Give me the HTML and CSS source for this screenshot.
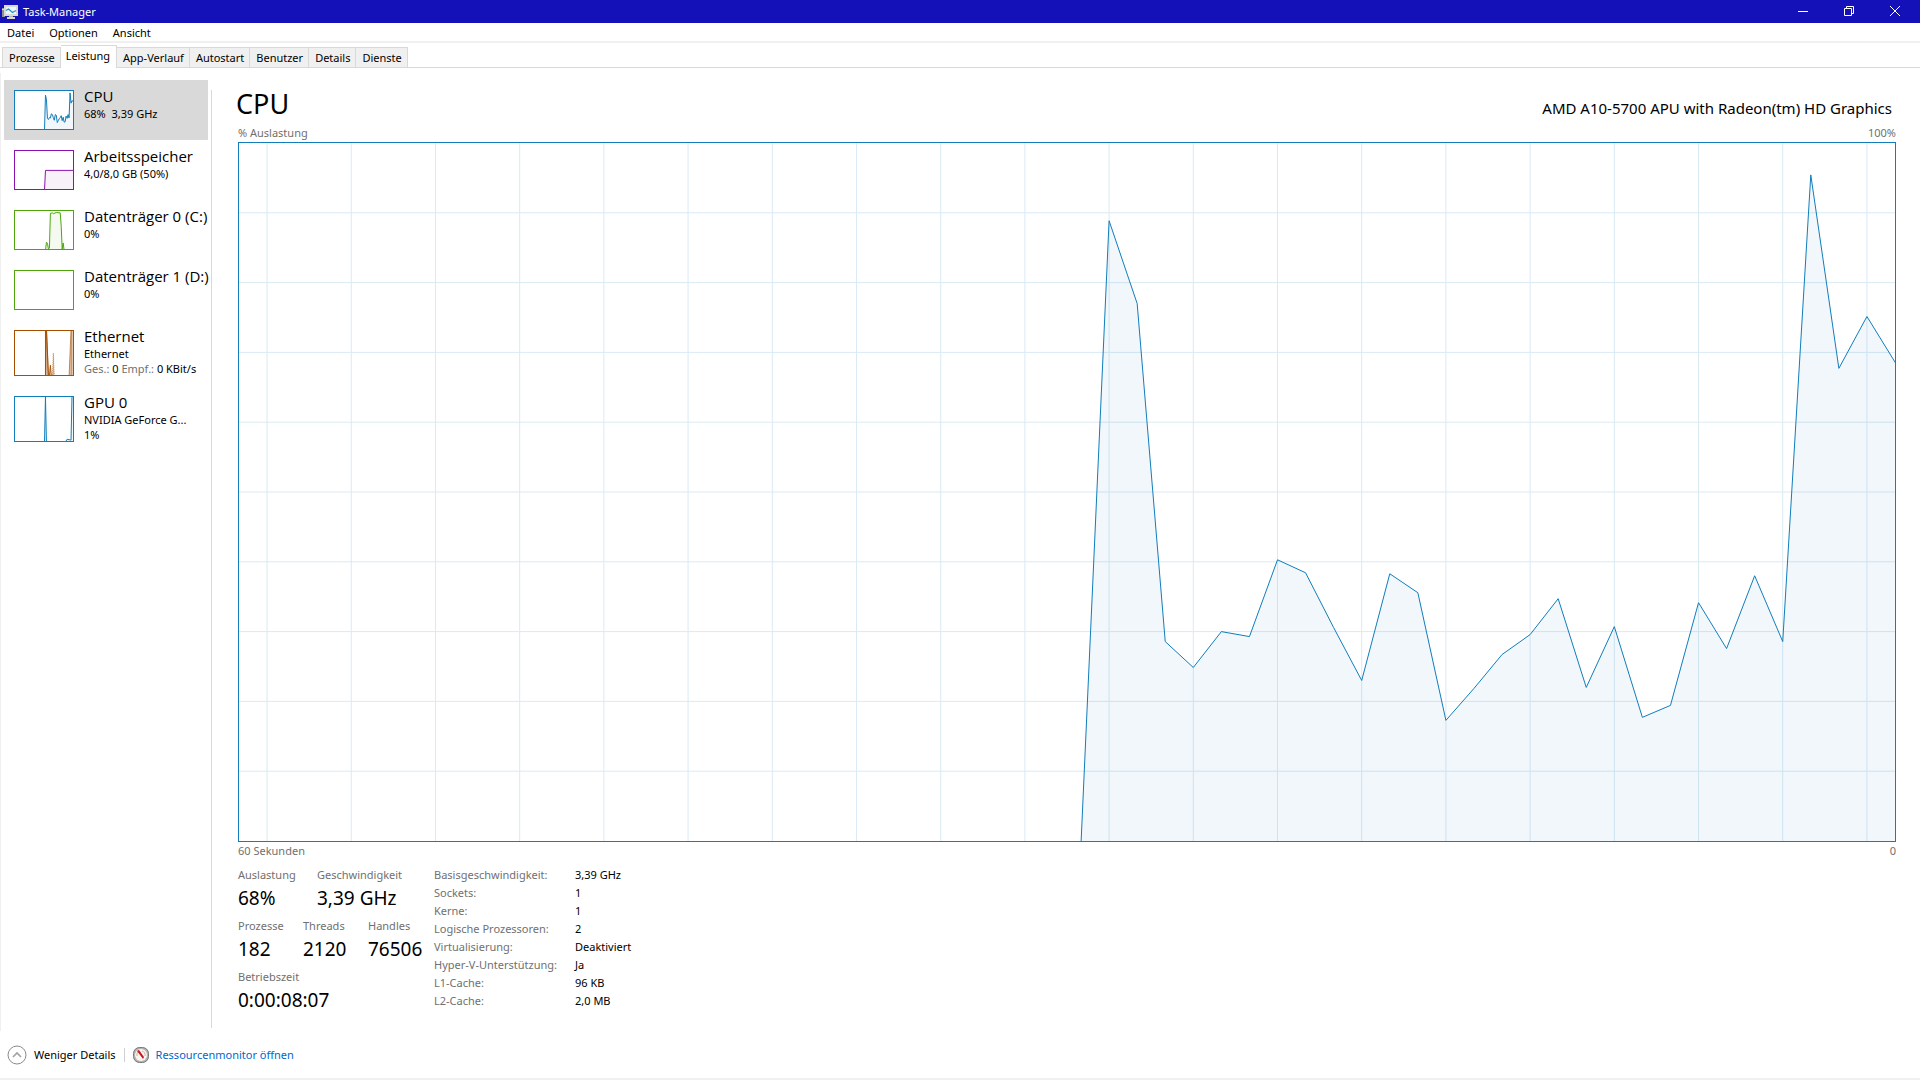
FILE: index.html
```html
<!DOCTYPE html>
<html lang="de">
  <head>
    <meta charset="UTF-8" />
    <meta name="viewport" content="width=device-width, initial-scale=1.0" />
    <title>Task-Manager</title>
    <link rel="stylesheet" href="styles.css">
  </head>
  <body>
    <header class="titlebar">
      <svg class="app-icon" width="16" height="16" viewBox="0 0 16 16">
        <rect x="0" y="4" width="3" height="9" fill="#8f9296" />
        <rect x="0" y="5" width="2" height="1" fill="#d8dadc" />
        <rect x="2" y="1" width="14" height="11" fill="#d9d9d2" />
        <rect x="4" y="3" width="10" height="7" fill="#e9f7fc" />
        <path d="M4 6.500l2.500-1.500 4 3.500 3.500-2" fill="none" stroke="#2a93bd" stroke-width="1.200" />
        <rect x="7" y="12" width="4" height="1" fill="#b5b5ae" />
        <rect x="5" y="13" width="8" height="2" fill="#d9d9d2" />
      </svg>
      <h1>Task-Manager</h1>
      <div class="window-buttons">
        <button aria-label="Minimieren">
          <svg width="10" height="10" viewBox="0 0 10 10"><path d="M0 5.5h10" /></svg>
        </button>
        <button aria-label="Verkleinern">
          <svg width="10" height="10" viewBox="0 0 10 10"><path d="M.5 2.5h7v7h-7zM2.5 2.5v-2h7v7h-2" /></svg>
        </button>
        <button aria-label="Schließen">
          <svg width="10" height="10" viewBox="0 0 10 10"><path d="M0 0l10 10M10 0L0 10" /></svg>
        </button>
      </div>
    </header>

    <nav class="menubar">
      <button>Datei</button>
      <button>Optionen</button>
      <button>Ansicht</button>
    </nav>

    <div class="tabs" role="tablist">
      <button role="tab">Prozesse</button>
      <button role="tab" class="active" aria-selected="true">Leistung</button>
      <button role="tab">App-Verlauf</button>
      <button role="tab">Autostart</button>
      <button role="tab">Benutzer</button>
      <button role="tab">Details</button>
      <button role="tab">Dienste</button>
    </div>

    <div class="content">
      <aside class="sidebar">
        <button class="resource selected">
          <svg class="thumb cpu" viewBox="0 0 59 100" preserveAspectRatio="none">
            <polygon points="30,104 31,11 32,23 33,72 34,75 35,70 36,71 37,60 38,62 39,70 40,77 41,62 42,64 43,83 44,78 45,73 46,70 47,65 48,78 49,69 50,82 51,81 52,66 53,72 54,62 55,71 56,5 57,32 58,25 61,32 61,104" />
          </svg>
          <span class="info">
            <span class="name">CPU</span>
            <span class="detail">68%&nbsp; 3,39 GHz</span>
          </span>
        </button>
        <button class="resource">
          <svg class="thumb memory" viewBox="0 0 59 100" preserveAspectRatio="none">
            <polygon points="30,104 31,51 61,51 61,104" />
          </svg>
          <span class="info">
            <span class="name">Arbeitsspeicher</span>
            <span class="detail">4,0/8,0 GB (50%)</span>
          </span>
        </button>
        <button class="resource">
          <svg class="thumb disk" viewBox="0 0 59 100" preserveAspectRatio="none">
            <polygon points="31,104 32,82 33,85 34,100 35,98 36,6 38,5 39,7 42,4 46,5 47,40 48,100 49,84 50,104" />
          </svg>
          <span class="info">
            <span class="name">Datenträger 0 (C:)</span>
            <span class="detail">0%</span>
          </span>
        </button>
        <button class="resource">
          <svg class="thumb disk" viewBox="0 0 59 100" preserveAspectRatio="none"></svg>
          <span class="info">
            <span class="name">Datenträger 1 (D:)</span>
            <span class="detail">0%</span>
          </span>
        </button>
        <button class="resource">
          <svg class="thumb tall ethernet" viewBox="0 0 59 100" preserveAspectRatio="none">
            <path d="M31 104V-4M32 -4L34 104M35 104L36 78L37 104" />
            <polygon points="31,104 32,-4 33,45 34,104" />
            <polygon class="dotted" points="38,104 39,50 40,104" />
            <polygon points="55,104 56,50 57,-4 58,-4 58,104" />
          </svg>
          <span class="info">
            <span class="name">Ethernet</span>
            <span class="detail">Ethernet</span>
            <span class="detail"><span class="muted">Ges.:</span> 0 <span class="muted">Empf.:</span> 0 KBit/s</span>
          </span>
        </button>
        <button class="resource">
          <svg class="thumb tall cpu" viewBox="0 0 59 100" preserveAspectRatio="none">
            <polygon points="30,104 31,0 32,104" />
            <polygon points="51,104 53,96 55,97 57,98 58,-4 61,-4 61,104" />
          </svg>
          <span class="info">
            <span class="name">GPU 0</span>
            <span class="detail">NVIDIA GeForce G...</span>
            <span class="detail">1%</span>
          </span>
        </button>
      </aside>

      <main class="panel">
        <div class="panel-header">
          <h2>CPU</h2>
          <span class="model">AMD A10-5700 APU with Radeon(tm) HD Graphics</span>
        </div>
        <div class="axis">
          <span>% Auslastung</span>
          <span>100%</span>
        </div>
        <!-- one step on the x axis is 28 units, one grid row is 70 units -->
        <svg class="graph" viewBox="0 0 1652 700" preserveAspectRatio="none">
          <path class="grid" d="M28 0v700M112 0v700M196 0v700M280 0v700M364 0v700M448 0v700M532 0v700M616 0v700M700 0v700M784 0v700M868 0v700M952 0v700M1036 0v700M1120 0v700M1204 0v700M1288 0v700M1372 0v700M1456 0v700M1540 0v700M1624 0v700" />
          <path class="grid" d="M0 70h1652M0 140h1652M0 210h1652M0 280h1652M0 350h1652M0 420h1652M0 490h1652M0 560h1652M0 630h1652" />
          <polygon class="load" points="840,702 868,78 896,161 924,500 952,526 980,490 1008,495 1036,418 1064,431 1092,486 1120,539 1148,432 1176,451 1204,579 1232,547 1260,513 1288,493 1316,457 1344,546 1372,485 1400,576 1428,564 1456,461 1484,507 1512,434 1540,500 1568,32 1596,226 1624,174 1654,223 1654,702" />
        </svg>
        <div class="axis">
          <span>60 Sekunden</span>
          <span>0</span>
        </div>

        <div class="stats">
          <div class="live">
            <div class="live-row">
              <div class="stat wide"><span>Auslastung</span><strong>68%</strong></div>
              <div class="stat"><span>Geschwindigkeit</span><strong>3,39 GHz</strong></div>
            </div>
            <div class="live-row">
              <div class="stat"><span>Prozesse</span><strong>182</strong></div>
              <div class="stat"><span>Threads</span><strong>2120</strong></div>
              <div class="stat"><span>Handles</span><strong>76506</strong></div>
            </div>
            <div class="live-row">
              <div class="stat"><span>Betriebszeit</span><strong>0:00:08:07</strong></div>
            </div>
          </div>
          <table class="specs">
            <tr><th>Basisgeschwindigkeit:</th><td>3,39 GHz</td></tr>
            <tr><th>Sockets:</th><td>1</td></tr>
            <tr><th>Kerne:</th><td>1</td></tr>
            <tr><th>Logische Prozessoren:</th><td>2</td></tr>
            <tr><th>Virtualisierung:</th><td>Deaktiviert</td></tr>
            <tr><th>Hyper-V-Unterstützung:</th><td>Ja</td></tr>
            <tr><th>L1-Cache:</th><td>96 KB</td></tr>
            <tr><th>L2-Cache:</th><td>2,0 MB</td></tr>
          </table>
        </div>
      </main>
    </div>

    <footer class="footer">
      <button class="fewer">
        <svg width="20" height="20" viewBox="0 0 20 20" fill="none">
          <circle cx="10" cy="10" r="9" stroke="#8a8a8a" />
          <path d="M6 12l4-4 4 4" stroke="#a0a0a0" stroke-width="1.6" />
        </svg>
        Weniger Details
      </button>
      <span class="divider"></span>
      <a class="resmon" href="#">
        <svg width="16" height="16" viewBox="0 0 16 16">
          <rect x=".5" y=".5" width="15" height="15" rx="6" fill="#b4b4b4" stroke="#777" />
          <circle cx="8" cy="8" r="6" fill="#f8f5f0" />
          <path d="M4 9a4 4 0 0 1 1-4M9 4a4 4 0 0 1 3 5" fill="none" stroke="#d9a79a" />
          <path d="M4 4l2-1 5 7-1 2z" fill="#c8161d" />
        </svg>
        Ressourcenmonitor öffnen
      </a>
    </footer>
  </body>
</html>
```

FILE: styles.css
```css
* {
  box-sizing: border-box;
}

body {
  font-family: "Noto Sans", "Segoe UI", sans-serif;
  font-size: 11px;
  line-height: 16px;
  margin: 0;
  min-height: 100vh;
  display: flex;
  flex-direction: column;
  background: #fff;
  color: #000;
}

button {
  font: inherit;
  color: inherit;
  background: none;
  border: none;
  padding: 0;
  margin: 0;
  text-align: left;
}

h1,
h2 {
  font-weight: 400;
  margin: 0;
}

svg {
  flex-shrink: 0;
}

.titlebar {
  display: flex;
  align-items: center;
  height: 23px;
  padding-left: 2px;
  background: #1411b8;
  color: #fff;
}

.titlebar h1 {
  font-size: 11px;
  margin-left: 5px;
}

.window-buttons {
  display: flex;
  margin-left: auto;
}

.window-buttons button {
  display: flex;
  justify-content: center;
  width: 46px;
  padding: 0 4px 2px 0;
}

.window-buttons path {
  fill: none;
  stroke: #fff;
}

.menubar {
  display: flex;
  gap: 15px;
  height: 20px;
  padding: 2px 7px 0;
  border-bottom: 2px solid #f0f0f0;
}

.tabs {
  display: flex;
  align-items: flex-end;
  height: 25px;
  padding-left: 2px;
  border-bottom: 1px solid #d9d9d9;
}

.tabs button {
  height: 20px;
  padding: 0 5px 0 6px;
  background: #f0f0f0;
  border: 1px solid #d9d9d9;
  border-width: 1px 1px 0 0;
}

.tabs button:first-child {
  border-left-width: 1px;
}

.tabs .active {
  height: 23px;
  margin-bottom: -1px;
  padding: 0 6px 2px 5px;
  background: #fff;
}

.content {
  flex: 1;
  display: flex;
  margin-top: 5px;
  padding: 7px 24px 3px 3px;
  border-left: 1px solid #f0f0f0;
}

.sidebar {
  width: 204px;
  margin-right: 3px;
}

.resource {
  display: flex;
  gap: 10px;
  width: 100%;
  padding: 10px 0 10px 10px;
  white-space: nowrap;
}

.resource.selected {
  background: #d9d9d9;
}

.thumb {
  width: 60px;
  height: 40px;
  background: #fff;
  border: 1px solid;
}

.thumb.tall {
  height: 46px;
}

.thumb polygon,
.thumb path,
.graph .load {
  fill: currentColor;
  fill-opacity: 0.06;
  stroke: currentColor;
  stroke-width: 1px;
  vector-effect: non-scaling-stroke;
}

.cpu,
.graph {
  color: #117dbb;
}

.memory {
  color: #8b12ae;
}

.disk {
  color: #4da60c;
}

.ethernet {
  color: #a74f01;
}

.thumb.ethernet polygon {
  fill-opacity: 0.4;
  stroke-opacity: 0.6;
}

.thumb .dotted {
  stroke-dasharray: 1 1;
}

.info {
  display: flex;
  flex-direction: column;
}

.name {
  font-family: "Open Sans", "Segoe UI", sans-serif;
  font-size: 15px;
  line-height: 12px;
  margin-bottom: 4px;
}

.detail {
  line-height: 15px;
}

.muted {
  color: #707070;
}

.panel {
  flex: 1;
  display: flex;
  flex-direction: column;
  margin-top: 10px;
  padding: 0 0 9px 26px;
  border-left: 1px solid #d9d9d9;
}

.panel-header {
  display: flex;
  justify-content: space-between;
  align-items: baseline;
  margin-bottom: 6px;
  padding-right: 4px;
}

.panel-header h2 {
  font-size: 27px;
  line-height: 28px;
  margin-left: -2px;
}

.model {
  font-size: 15px;
}

.axis {
  display: flex;
  justify-content: space-between;
  line-height: 18px;
  color: #707070;
}

.graph {
  flex: 1 1 0px;
  width: 100%;
  height: 0;
  min-height: 200px;
  border: 1px solid;
}

.graph .grid {
  fill: none;
  stroke: #d9eaf4;
  vector-effect: non-scaling-stroke;
  shape-rendering: crispEdges;
}

.stats {
  display: flex;
  margin-top: 6px;
}

.live {
  width: 196px;
  margin: 1px 0 -1px;
}

.live-row {
  display: flex;
  height: 51px;
}

.stat {
  display: flex;
  flex-direction: column;
  min-width: 65px;
  color: #707070;
}

.stat.wide {
  min-width: 79px;
}

.stat strong {
  font-size: 19px;
  font-weight: 400;
  line-height: 30px;
  color: #000;
}

.specs {
  align-self: flex-start;
  border-collapse: collapse;
}

.specs th,
.specs td {
  padding: 0;
  font-weight: 400;
  line-height: 18px;
  text-align: left;
}

.specs th {
  width: 141px;
  color: #707070;
}

.footer {
  display: flex;
  align-items: center;
  gap: 8px;
  height: 49px;
  padding: 1px 0 0 7px;
  border-bottom: 2px solid #f0f0f0;
}

.fewer,
.resmon {
  display: flex;
  align-items: center;
  gap: 7px;
}

.divider {
  width: 1px;
  height: 14px;
  background: #d0d0d0;
}

.resmon {
  color: #0066cc;
  text-decoration: none;
}
```
